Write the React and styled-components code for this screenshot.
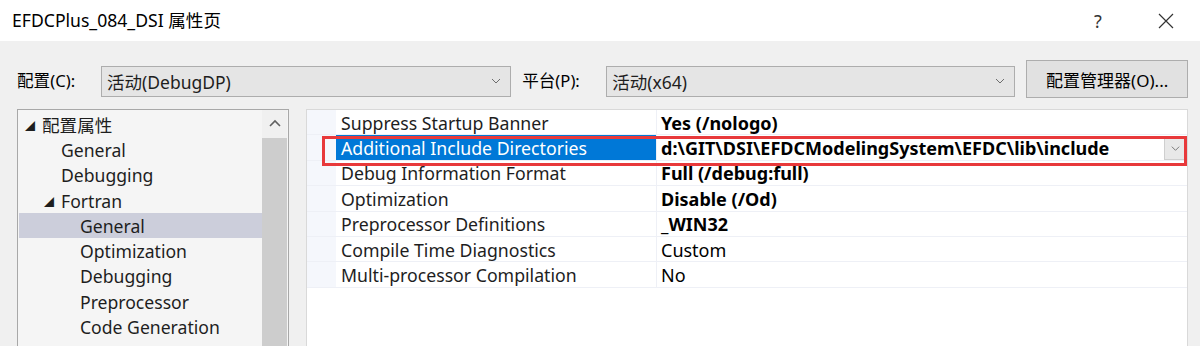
import React from "react";
import styled, { createGlobalStyle } from "styled-components";

const GlobalStyle = createGlobalStyle`
  html, body {
    margin: 0;
    padding: 0;
    background: #f0f0f0;
  }
  body {
    font-family: "Noto Sans", "Noto Sans CJK SC", sans-serif;
    color: #1e1e1e;
  }
`;

const Window = styled.div`
  width: 1200px;
  height: 346px;
  overflow: hidden;
  background: #f0f0f0;
  display: flex;
  flex-direction: column;
`;

const TitleBar = styled.div`
  height: 41px;
  background: #fff;
  display: flex;
  align-items: center;
  padding: 0 0 0 12px;
  flex-shrink: 0;
  font-size: 17.6px;
  color: #000;
`;

const Title = styled.div`
  flex: 1;
  padding-bottom: 3px;
`;

const TitleButton = styled.div`
  width: 68px;
  display: flex;
  justify-content: center;
  align-items: center;
  font-size: 18px;
  color: #333;
`;

const Toolbar = styled.div`
  display: flex;
  align-items: center;
  padding: 19px 12px 0 17px;
  height: 38px;
`;

const Label = styled.div`
  font-size: 16.6px;
  color: #000;
  width: ${(p) => p.$w}px;
  flex-shrink: 0;
  padding-top: 2px;
`;

const Combo = styled.div`
  width: ${(p) => p.$w}px;
  height: 31px;
  margin-top: 4px;
  border: 1px solid #adadad;
  background: #e5e5e5;
  display: flex;
  align-items: center;
  padding-left: 5px;
  box-sizing: border-box;
  font-size: 17.5px;
  margin-right: 11px;
`;

const ComboText = styled.div`
  flex: 1;
`;

const Chevron = ({ size = 12, color = "#6d6d6d" }) => (
  <svg width={size} height={size} viewBox="0 0 12 12">
    <path d="M2 4 L6 8 L10 4" fill="none" stroke={color} strokeWidth="1" />
  </svg>
);

const ChevronBox = styled.div`
  width: 28px;
  display: flex;
  justify-content: center;
  align-items: center;
`;

const Button = styled.div`
  width: 162px;
  height: 38px;
  border: 1px solid #adadad;
  background: #e1e1e1;
  box-sizing: border-box;
  display: flex;
  justify-content: center;
  align-items: center;
  font-size: 17px;
  color: #000;
`;

const Main = styled.div`
  display: flex;
  padding: 11px 12px 0 17px;
  gap: 17px;
  flex: 1;
`;

const TreePanel = styled.div`
  width: 272px;
  border: 1px solid #a8a8a8;
  border-bottom: none;
  background: #f5f5f5;
  display: flex;
  box-sizing: border-box;
`;

const Tree = styled.div`
  flex: 1;
  padding-top: 2px;
  padding-left: 1px;
`;

const TreeRow = styled.div`
  height: 25.3px;
  display: flex;
  align-items: center;
  padding-left: ${(p) => p.$indent}px;
  background: ${(p) => (p.$selected ? "#cccedb" : "transparent")};
  font-size: 17.6px;
  color: #1e1e1e;
  white-space: nowrap;
`;

const Expander = styled.span`
  width: 17px;
  font-size: 10px;
  color: #1e1e1e;
  margin-left: -17px;
  padding-top: 2px;
`;

const ScrollBar = styled.div`
  width: 25px;
  margin-right: 1px;
  display: flex;
  flex-direction: column;
  background: #f0f0f0;
`;

const ScrollArrow = styled.div`
  height: 28px;
  display: flex;
  justify-content: center;
  align-items: center;
`;

const ScrollThumb = styled.div`
  flex: 1;
  background: #cdcdcd;
`;

const GridPanel = styled.div`
  flex: 1;
  position: relative;
  border: 1px solid #d9d9d9;
  border-bottom: none;
  background: #fff;
  box-sizing: border-box;
`;

const GridRow = styled.div`
  display: flex;
  height: 25.4px;
  box-sizing: border-box;
  border-bottom: 1px solid #eef0f6;
`;

const Gutter = styled.div`
  width: 29px;
  background: #f5f7fc;
  flex-shrink: 0;
`;

const NameCell = styled.div`
  width: 321px;
  flex-shrink: 0;
  padding: 1px 0 0 5px;
  box-sizing: border-box;
  display: flex;
  align-items: center;
  font-size: 17.7px;
  background: ${(p) => (p.$selected ? "#0078d7" : "#fff")};
  color: ${(p) => (p.$selected ? "#fff" : "#1e1e1e")};
  border-right: 1px solid #eef0f6;
  white-space: nowrap;
`;

const ValueCell = styled.div`
  flex: 1;
  display: flex;
  align-items: center;
  padding: 1px 0 0 4px;
  font-size: 18px;
  font-weight: ${(p) => (p.$bold ? 700 : 400)};
  color: #000;
  white-space: nowrap;
`;

const ValueText = styled.div`
  flex: 1;
`;

const CellDrop = styled.div`
  width: 22px;
  height: 23px;
  margin-right: 1px;
  background: #e8e8e8;
  border: 1px solid #cfcfcf;
  box-sizing: border-box;
  display: flex;
  justify-content: center;
  align-items: center;
`;

const Highlight = styled.div`
  position: absolute;
  left: 15px;
  right: 0px;
  top: 26px;
  height: 30px;
  border: 3px solid #e8393b;
  box-sizing: border-box;
  pointer-events: none;
`;

const treeItems = [
  { label: "配置属性", indent: 23, expander: true },
  { label: "General", indent: 42 },
  { label: "Debugging", indent: 42 },
  { label: "Fortran", indent: 42, expander: true },
  { label: "General", indent: 61, selected: true },
  { label: "Optimization", indent: 61 },
  { label: "Debugging", indent: 61 },
  { label: "Preprocessor", indent: 61 },
  { label: "Code Generation", indent: 61 },
];

const properties = [
  { name: "Suppress Startup Banner", value: "Yes (/nologo)", bold: true },
  {
    name: "Additional Include Directories",
    value: "d:\\GIT\\DSI\\EFDCModelingSystem\\EFDC\\lib\\include",
    bold: true,
    selected: true,
  },
  { name: "Debug Information Format", value: "Full (/debug:full)", bold: true },
  { name: "Optimization", value: "Disable (/Od)", bold: true },
  { name: "Preprocessor Definitions", value: "_WIN32", bold: true },
  { name: "Compile Time Diagnostics", value: "Custom" },
  { name: "Multi-processor Compilation", value: "No" },
];

const App = () => {
  return (
    <Window>
      <GlobalStyle />
      <TitleBar>
        <Title>EFDCPlus_084_DSI 属性页</Title>
        <TitleButton>?</TitleButton>
        <TitleButton>
          <svg width="16" height="16" viewBox="0 0 16 16">
            <path d="M1 1 L15 15 M15 1 L1 15" stroke="#333" strokeWidth="1.2" />
          </svg>
        </TitleButton>
      </TitleBar>

      <Toolbar>
        <Label $w={84}>配置(C):</Label>
        <Combo $w={411}>
          <ComboText>活动(DebugDP)</ComboText>
          <ChevronBox>
            <Chevron />
          </ChevronBox>
        </Combo>
        <Label $w={84}>平台(P):</Label>
        <Combo $w={410}>
          <ComboText>活动(x64)</ComboText>
          <ChevronBox>
            <Chevron />
          </ChevronBox>
        </Combo>
        <Button>配置管理器(O)...</Button>
      </Toolbar>

      <Main>
        <TreePanel>
          <Tree>
            {treeItems.map((item, idx) => (
              <TreeRow key={idx} $indent={item.indent} $selected={item.selected}>
                {item.expander && <Expander>◢</Expander>}
                {item.label}
              </TreeRow>
            ))}
          </Tree>
          <ScrollBar>
            <ScrollArrow>
              <svg width="14" height="10" viewBox="0 0 14 10">
                <path d="M2 7 L7 2 L12 7" fill="none" stroke="#606060" strokeWidth="1.6" />
              </svg>
            </ScrollArrow>
            <ScrollThumb />
          </ScrollBar>
        </TreePanel>

        <GridPanel>
          {properties.map((prop, idx) => (
            <GridRow key={idx}>
              <Gutter />
              <NameCell $selected={prop.selected}>{prop.name}</NameCell>
              <ValueCell $bold={prop.bold}>
                <ValueText>{prop.value}</ValueText>
                {prop.selected && (
                  <CellDrop>
                    <Chevron size={11} color="#707070" />
                  </CellDrop>
                )}
              </ValueCell>
            </GridRow>
          ))}
          <Highlight />
        </GridPanel>
      </Main>
    </Window>
  );
};

export default App;
